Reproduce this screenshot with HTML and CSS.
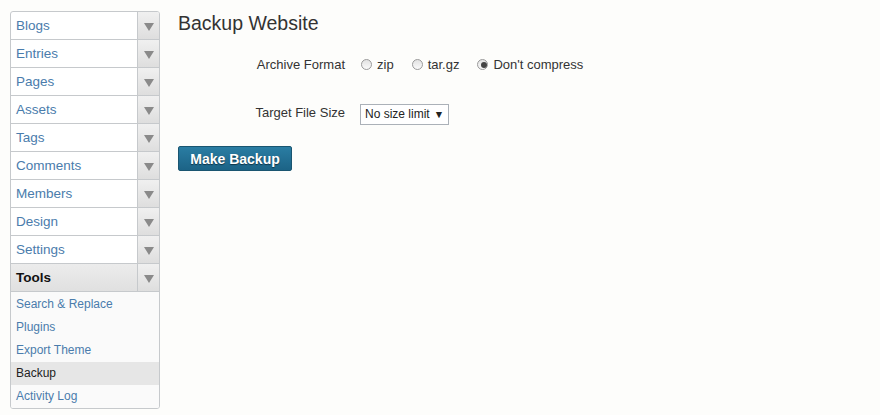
FILE: index.html
```html
<!DOCTYPE html>
<html>
  <head>
    <title>Backup Website</title>
    <meta charset="utf-8" />
    <link rel="stylesheet" href="styles.css">
  </head>
  <body>
    <div class="page">
      <div class="sidebar">
        <div class="menu_item"><a href="#">Blogs</a><span class="arrow"></span></div>
        <div class="menu_item"><a href="#">Entries</a><span class="arrow"></span></div>
        <div class="menu_item"><a href="#">Pages</a><span class="arrow"></span></div>
        <div class="menu_item"><a href="#">Assets</a><span class="arrow"></span></div>
        <div class="menu_item"><a href="#">Tags</a><span class="arrow"></span></div>
        <div class="menu_item"><a href="#">Comments</a><span class="arrow"></span></div>
        <div class="menu_item"><a href="#">Members</a><span class="arrow"></span></div>
        <div class="menu_item"><a href="#">Design</a><span class="arrow"></span></div>
        <div class="menu_item"><a href="#">Settings</a><span class="arrow"></span></div>
        <div class="menu_item active"><a href="#">Tools</a><span class="arrow"></span></div>
        <ul class="submenu">
          <li><a href="#">Search &amp; Replace</a></li>
          <li><a href="#">Plugins</a></li>
          <li><a href="#">Export Theme</a></li>
          <li class="current"><a href="#">Backup</a></li>
          <li><a href="#">Activity Log</a></li>
        </ul>
      </div>

      <div class="content">
        <h1>Backup Website</h1>
        <div class="form_row archive_row">
          <div class="label">Archive Format</div>
          <div class="field">
            <label class="radio"><input type="radio" name="format" /> zip</label>
            <label class="radio"><input type="radio" name="format" /> tar.gz</label>
            <label class="radio"><input type="radio" name="format" checked /> Don't compress</label>
          </div>
        </div>
        <div class="form_row size_row">
          <div class="label size_label">Target File Size</div>
          <div class="field">
            <div class="select">No size limit <span class="select_arrow">▼</span></div>
          </div>
        </div>
        <div>
          <input class="button" type="button" value="Make Backup" />
        </div>
      </div>
    </div>
  </body>
</html>
```

FILE: styles.css
```css
* {
  margin: 0;
  padding: 0;
}

input {
  margin: 0;
  padding: 0;
  appearance: none;
  -webkit-appearance: none;
}

body {
  background-color: #fdfdfb;
  color: #333;
  font-family: "Liberation Sans", Arial, sans-serif;
  font-size: 13px;
}

.page {
  display: flex;
  padding: 11px 0 0 10px;
}

.sidebar {
  width: 148px;
  border: 1px solid #c6c9cc;
  border-radius: 3px;
  background-color: white;
  overflow: hidden;
}

.menu_item {
  display: flex;
  height: 27px;
  border-bottom: 1px solid #c6c9cc;
}

.menu_item a {
  flex: 1;
  line-height: 27px;
  padding-left: 5px;
  color: #4a7cac;
  text-decoration: none;
  font-size: 13.5px;
}

.menu_item .arrow {
  width: 21px;
  border-left: 1px solid #c6c9cc;
  background: linear-gradient(#f0f0f0, #dedede);
  position: relative;
}

.menu_item .arrow::after {
  content: "";
  position: absolute;
  left: 6px;
  top: 11px;
  border-left: 5px solid transparent;
  border-right: 5px solid transparent;
  border-top: 8px solid #8a8a8a;
}

.menu_item.active {
  background: linear-gradient(#ececec, #e0e0e0);
}

.menu_item.active a {
  color: #111;
  font-weight: bold;
}

.submenu {
  list-style: none;
  background-color: #fafafa;
}

.submenu li {
  height: 23px;
  line-height: 23px;
}

.submenu li:first-child {
  height: 24px;
  line-height: 25px;
}

.submenu a {
  display: block;
  padding-left: 5px;
  color: #4a7cac;
  text-decoration: none;
  font-size: 12px;
}

.submenu li.current {
  background-color: #e6e6e6;
}

.submenu li.current a {
  color: #222;
}

.content {
  padding-left: 18px;
}

h1 {
  font-size: 19.5px;
  font-weight: normal;
  color: #333;
  line-height: 24px;
}

.form_row {
  display: flex;
  align-items: center;
}

.archive_row {
  margin-top: 19px;
  height: 20px;
}

.size_row {
  margin-top: 29px;
  height: 22px;
}

.label {
  width: 167px;
  text-align: right;
  padding-right: 15px;
  color: #333;
}

.size_label {
  margin-top: -3px;
}

.field {
  display: flex;
  align-items: center;
}

.radio {
  display: flex;
  align-items: center;
  margin-right: 17px;
  color: #333;
}

.radio input {
  width: 11px;
  height: 11px;
  border: 1px solid #9a9a9a;
  border-radius: 50%;
  background: linear-gradient(#e2e2e2, #fafafa);
  margin: 0 5px 0 1px;
  position: relative;
}

.radio input:checked::after {
  content: "";
  position: absolute;
  left: 2.5px;
  top: 2.5px;
  width: 6px;
  height: 6px;
  border-radius: 50%;
  background-color: #444;
}

.select {
  display: flex;
  align-items: center;
  white-space: nowrap;
  width: 83px;
  height: 19px;
  border: 1px solid #abb1b8;
  background-color: white;
  padding-left: 4px;
  font-size: 12px;
  color: #222;
}

.select_arrow {
  font-size: 10.5px;
  margin-left: 4px;
}

.button {
  margin-top: 21px;
  height: 25px;
  width: 114px;
  border: 1px solid #1a5570;
  border-radius: 2px;
  background: linear-gradient(#2a7da3, #1c6386);
  color: white;
  font-family: "Liberation Sans", Arial, sans-serif;
  font-size: 14px;
  font-weight: bold;
  text-shadow: 0 1px 1px #0d3447;
  cursor: pointer;
}
```
